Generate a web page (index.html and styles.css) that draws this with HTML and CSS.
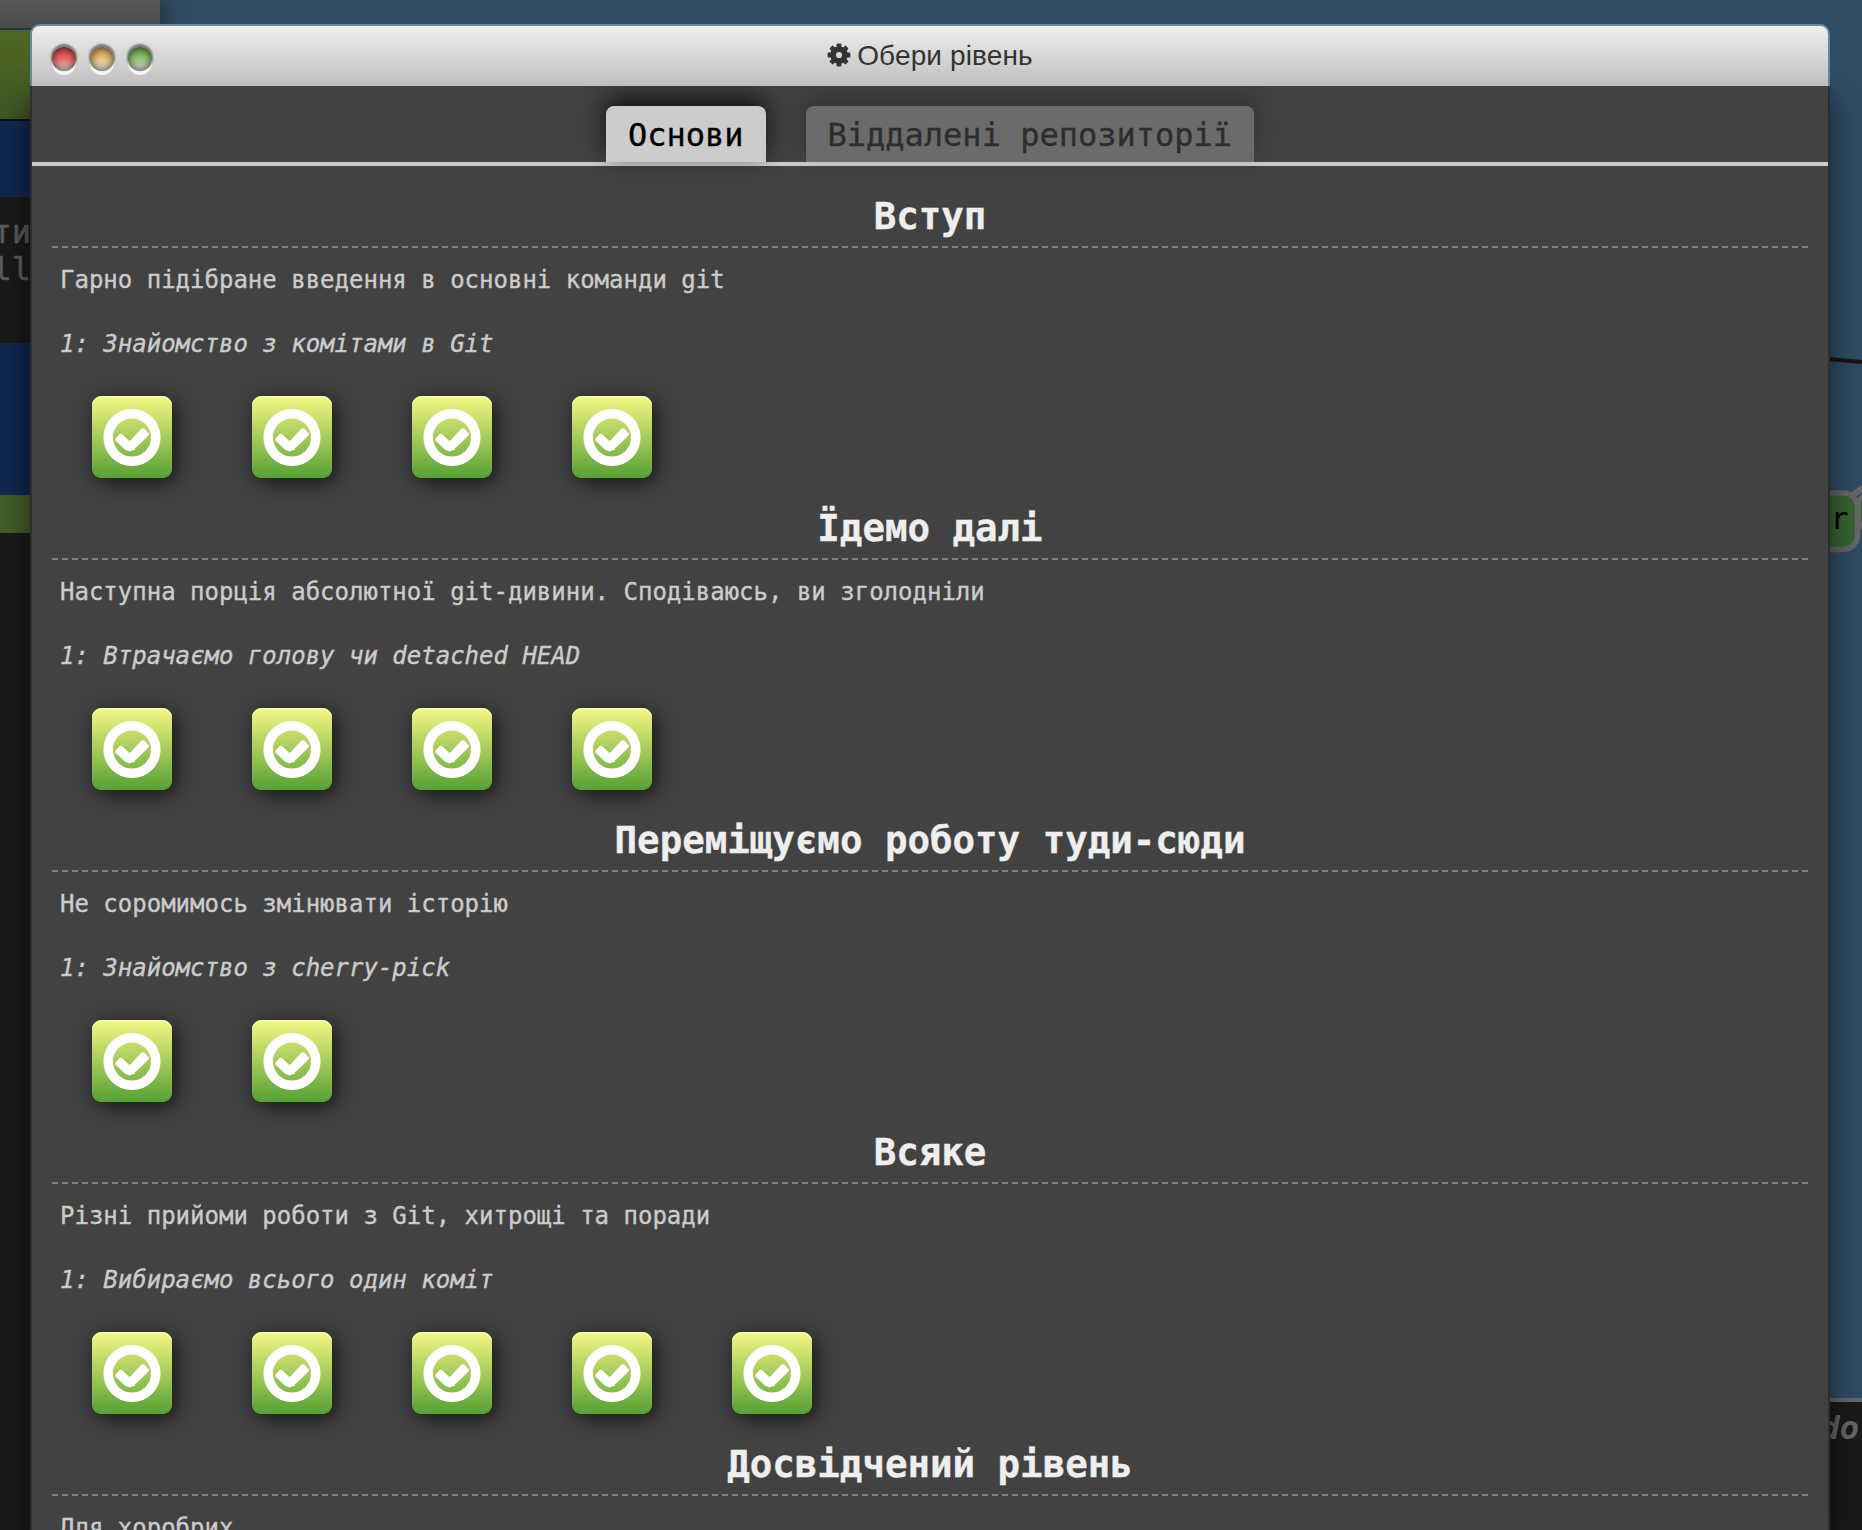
FILE: index.html
```html
<!DOCTYPE html>
<html lang="uk">
<head>
<meta charset="utf-8">
<title>Обери рівень</title>
<link rel="stylesheet" href="styles.css">
</head>
<body>
<svg width="0" height="0" class="defs">
  <symbol id="ok" viewBox="0 0 80 82">
    <circle cx="40" cy="41.5" r="23.8" fill="none" stroke="#fff" stroke-width="9.5"/>
    <path d="M25.2 43.5 28.9 39.8 37.6 48 50.8 34 54.9 38.1 40.6 52.3Q37.6 54 34.6 52.3Z" fill="#fff" stroke="#fff" stroke-width="4" stroke-linejoin="round"/>
  </symbol>
</svg>
<div class="desktop">
  <div class="terminal">
    <div class="strip gray"></div>
    <div class="strip green-top"></div>
    <div class="strip navy-a"></div>
    <div class="output"><span>ти</span><span>ll</span></div>
    <div class="strip navy-b"></div>
    <div class="strip green"></div>
  </div>
  <svg class="tree" width="40" height="220" viewBox="0 0 40 220">
    <path d="M0 18.6 40 22" stroke="#161616" stroke-width="4"/>
    <path d="M30 155 44 146" stroke="#666" stroke-width="6"/>
    <rect x="36" y="154" width="40" height="36" rx="12" fill="#386432" stroke="#666" stroke-width="5"/>
    <rect x="-60" y="153" width="95.500" height="56.500" rx="14" fill="#386432" stroke="#666" stroke-width="5.500"/>
    <text x="8.500" y="189" class="branch">r</text>
  </svg>
  <div class="footer-bar"><span>do</span></div>

  <div class="window">
    <header class="titlebar">
      <div class="lights"><i class="red"></i><i class="yellow"></i><i class="lime"></i></div>
      <svg class="gear" viewBox="0 0 24 24"><g fill="#333"><circle cx="12" cy="12" r="8.800"/><g id="t"><rect x="9.600" y="0.600" width="4.800" height="22.800" rx="1"/><rect x="0.600" y="9.600" width="22.800" height="4.800" rx="1"/></g><use href="#t" transform="rotate(45 12 12)"/></g><circle cx="12" cy="12" r="3.100" fill="#d5d5d5"/></svg>
      <span class="title">Обери рівень</span>
    </header>
    <main class="content">
      <nav class="tabs"><div class="tab active">Основи</div><div class="tab">Віддалені репозиторії</div></nav>
      <section class="series">
        <h3>Вступ</h3>
        <p>Гарно підібране введення в основні команди git</p>
        <p class="level">1: Знайомство з комітами в Git</p>
        <div class="icons"><b><svg><use href="#ok"/></svg></b><b><svg><use href="#ok"/></svg></b><b><svg><use href="#ok"/></svg></b><b><svg><use href="#ok"/></svg></b></div>
      </section>
      <section class="series">
        <h3>Їдемо далі</h3>
        <p>Наступна порція абсолютної git-дивини. Сподіваюсь, ви зголодніли</p>
        <p class="level">1: Втрачаємо голову чи detached HEAD</p>
        <div class="icons"><b><svg><use href="#ok"/></svg></b><b><svg><use href="#ok"/></svg></b><b><svg><use href="#ok"/></svg></b><b><svg><use href="#ok"/></svg></b></div>
      </section>
      <section class="series">
        <h3>Переміщуємо роботу туди-сюди</h3>
        <p>Не соромимось змінювати історію</p>
        <p class="level">1: Знайомство з cherry-pick</p>
        <div class="icons"><b><svg><use href="#ok"/></svg></b><b><svg><use href="#ok"/></svg></b></div>
      </section>
      <section class="series">
        <h3>Всяке</h3>
        <p>Різні прийоми роботи з Git, хитрощі та поради</p>
        <p class="level">1: Вибираємо всього один коміт</p>
        <div class="icons"><b><svg><use href="#ok"/></svg></b><b><svg><use href="#ok"/></svg></b><b><svg><use href="#ok"/></svg></b><b><svg><use href="#ok"/></svg></b><b><svg><use href="#ok"/></svg></b></div>
      </section>
      <section class="series">
        <h3>Досвідчений рівень</h3>
        <p>Для хоробрих</p>
      </section>
    </main>
  </div>
</div>
</body>
</html>
```
FILE: styles.css
```css
* { box-sizing: border-box; }
body { margin: 0; overflow: hidden; font-family: "DejaVu Sans Mono", monospace; }
.defs { position: absolute; }
.desktop { position: relative; width: 1862px; height: 1530px; overflow: hidden; background: #304b64; }

/* windows lying behind the dialog */
.terminal { position: absolute; left: 0; top: 0; width: 160px; height: 1530px; background: #1a1a1a; box-shadow: 0 0 24px rgba(30,35,35,.9); }
.gray { height: 30px; background: linear-gradient(#585858, #4b4b4b); border-bottom: 2px solid #2a3542; }
.green-top { height: 91px; background: linear-gradient(#4e6823, #3f5627); border-bottom: 2px solid #101410; }
.navy-a { height: 76px; background: #11284f; }
.output { height: 146px; width: 31px; padding-top: 17px; display: flex; flex-direction: column; align-items: flex-end; font-size: 32px; line-height: 37px; color: #5c5c5c; -webkit-text-stroke: .5px; }
.navy-b { height: 152px; background: #11284f; }
.green { height: 38px; background: #415f29; }
.tree { position: absolute; left: 1822px; top: 340px; }
.branch { font-size: 30px; fill: #000; }
.footer-bar { position: absolute; left: 1600px; top: 1398px; width: 262px; height: 132px; padding: 8px 3px 0 0; border-top: 4px solid #666; background: #1a1a1a; color: #666; font-size: 32px; line-height: 37px; font-weight: bold; font-style: italic; text-align: right; }

.window { position: absolute; left: 30px; top: 24px; width: 1800px; height: 1506px; }
.titlebar { position: relative; z-index: 1; display: flex; align-items: center; justify-content: center; height: 62px; border: 2px solid #6a87a4; border-bottom: 0; border-radius: 10px 10px 0 0; background: linear-gradient(#eee, #bfbfbf); }
.gear { width: 24px; height: 24px; margin: -2px 6px 0 0; }
.title { font: 28px/32px "Liberation Sans", Arial, sans-serif; letter-spacing: .13px; color: #333; }
.lights { position: absolute; left: 20px; top: 21px; display: flex; gap: 14px; }
.lights i { width: 24px; height: 24px; border-radius: 50%; box-shadow: 0 -2px 2px 1px rgba(0,0,0,.45), 0 4px 0 #f7f7f7, inset 0 0 8px rgba(0,0,0,.75); }
.red { background: linear-gradient(#b84a48, #ed6a65 50%, #ddd); }
.yellow { background: linear-gradient(#c99c58, #f0c480 50%, #e4e4e4); }
.lime { background: linear-gradient(#6d9f52, #95c878 50%, #ddd); }

.content { height: 1444px; background: #424242; border: solid #2e2e2e; border-width: 0 2px; box-shadow: 0 14px 28px rgba(0,0,0,.6); color: #ccc; -webkit-text-stroke: .35px; }
.tabs { display: flex; justify-content: center; gap: 40px; height: 80px; padding-top: 20px; border-bottom: 4px solid #ccc; }
.tab { height: 56px; padding: 11px 22px 8px; border-radius: 8px 8px 0 0; font-size: 32px; line-height: 37px; background: #6b6b6b; color: #2d2d2d; box-shadow: 0 -8px 24px rgba(0,0,0,.25); }
.tab.active { background: #ccc; color: #000; box-shadow: 0 -8px 24px rgba(0,0,0,.75); }
.series { padding: 28px 20px 0; }
h3 { margin: 0 0 18px; height: 54px; border-bottom: 2px dashed #828282; text-align: center; font-size: 37.44px; line-height: 44px; color: #eee; }
p { margin: 0 8px; font-size: 24px; line-height: 28px; white-space: nowrap; }
.level { margin-top: 36px; font-style: italic; }
.icons { display: flex; gap: 80px; margin: 38px 40px 0; }
.icons b { width: 80px; height: 82px; border-radius: 9px; background: linear-gradient(#f6f783, #56a034); box-shadow: 4px 4px 20px rgba(0,0,0,.7), inset 0 2px 1px rgba(255,255,255,.35); }
.icons svg { display: block; width: 80px; height: 82px; }
```
